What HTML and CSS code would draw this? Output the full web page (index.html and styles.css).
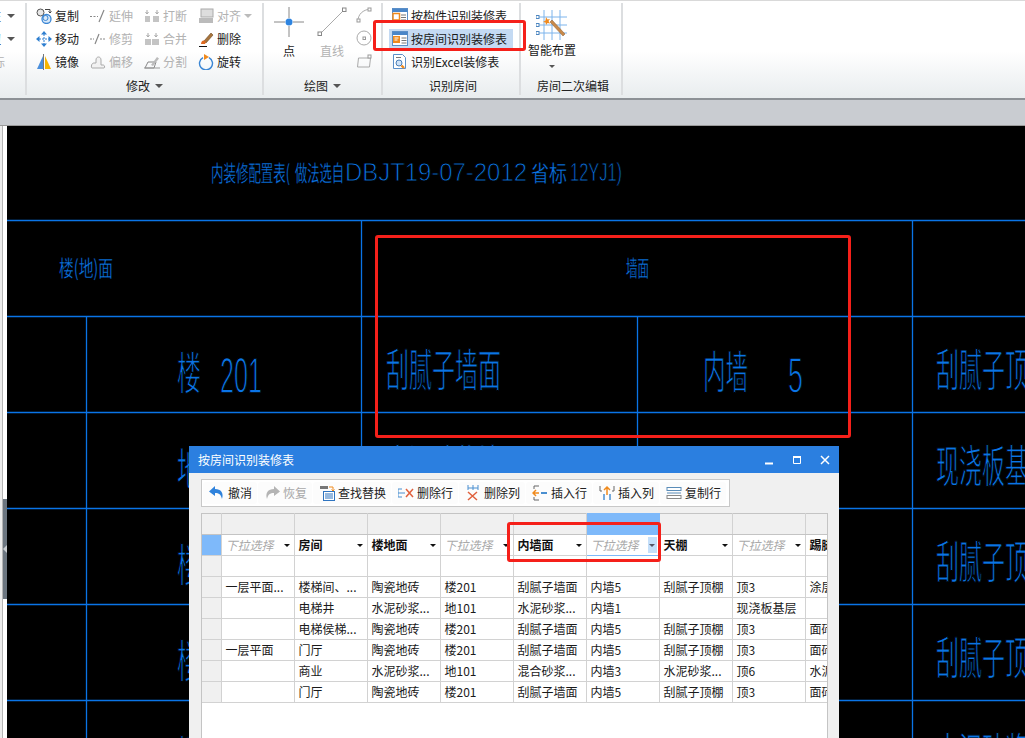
FILE: index.html
```html
<!DOCTYPE html>
<html lang="zh-CN">
<head>
<meta charset="utf-8">
<title>按房间识别装修表</title>
<link rel="stylesheet" href="styles.css">
</head>
<body>
<div class="page">
  <header class="ribbon">
    <section class="group group-cut">
      <div class="cut-rows">
        <div class="cut-row"><span>柱</span><i class="caret"></i></div>
        <div class="cut-row"><span>钮</span><i class="caret"></i></div>
        <div class="cut-row off"><span>标</span></div>
      </div>
    </section>

    <section class="group group-modify">
      <div class="tools">
        <div class="tool"><svg class="ic" viewBox="0 0 16 16"><circle cx="4.5" cy="4.5" r="3.5" fill="#e8e8e8" stroke="#555"/><circle cx="10.5" cy="11" r="4.5" fill="#d8e8f8" stroke="#3b86d4" stroke-width="1.3"/><circle cx="9.5" cy="10" r="2.5" fill="none" stroke="#3b86d4"/><path d="M9 1.5h5v3M12.5 3.5l1.5 1.5 1.5-1.5" fill="none" stroke="#444"/></svg><span>复制</span></div>
        <div class="tool off"><svg class="ic" viewBox="0 0 16 16"><path d="M0 8.5h8" stroke="#888" stroke-dasharray="2 1.5"/><path d="M9 14l5-12" stroke="#888" stroke-width="1.2"/></svg><span>延伸</span></div>
        <div class="tool off"><svg class="ic" viewBox="0 0 16 16"><path d="M1 8h5v6H1zM9 8h6v6H9z" fill="#c4c4c4"/><path d="M3 2v4M13 2v4M1.5 4L3 6l1.5-2M11.500 4L13 6l1.500-2" stroke="#aaa" fill="none"/></svg><span>打断</span></div>
        <div class="tool off"><svg class="ic" viewBox="0 0 16 16"><rect x="3" y="1" width="12" height="8" fill="#ddd" stroke="#aaa"/><rect x="1" y="10" width="14" height="5" fill="#bbb"/></svg><span>对齐</span><i class="caret light"></i></div>

        <div class="tool"><svg class="ic" viewBox="0 0 16 16"><path d="M8 3v10M3 8h10" stroke="#2e7fd0" stroke-dasharray="2 1"/><path d="M8 0l3 3.500H5zM8 16l3-3.500H5zM0 8l3.500-3v6zM16 8l-3.500-3v6z" fill="#2e7fd0"/></svg><span>移动</span></div>
        <div class="tool off"><svg class="ic" viewBox="0 0 16 16"><path d="M0 8h4M10 8h6" stroke="#888" stroke-dasharray="2 1"/><path d="M5 13L9 3" stroke="#888" stroke-width="1.2"/></svg><span>修剪</span></div>
        <div class="tool off"><svg class="ic" viewBox="0 0 16 16"><path d="M1 8h6v6H1zM8 8h7v6H8z" fill="#c4c4c4"/><path d="M4 2v4M12 2v4M2.500 4L4 6l1.500-2M10.500 4L12 6l1.500-2" stroke="#aaa" fill="none"/></svg><span>合并</span></div>
        <div class="tool"><svg class="ic" viewBox="0 0 16 16"><path d="M6 10L13 2l2 2-7 8z" fill="#a8743c" stroke="#6d4a22" stroke-width=".6"/><path d="M3 13c0-2 1.500-4 3-3.500 2 .5 2 2 1 3.500z" fill="#e06a20"/><path d="M1 15.500h8" stroke="#111"/></svg><span>删除</span></div>

        <div class="tool"><svg class="ic" viewBox="0 0 16 16"><path d="M7 2L1 15h6z" fill="#4a8fdc"/><path d="M7.500 0v16" stroke="#777"/><path d="M9 2l6 13H9z" fill="#f7b500"/></svg><span>镜像</span></div>
        <div class="tool off"><svg class="ic" viewBox="0 0 16 16"><path d="M2 14h12c1 0 1-3-1-3h-2V6c0-4-5-4-5 0v3H4c-3 0-3 5-2 5z" fill="#f2f2f2" stroke="#aaa"/></svg><span>偏移</span></div>
        <div class="tool off"><svg class="ic" viewBox="0 0 16 16"><path d="M1 14l3-6h8l-2 6z" fill="none" stroke="#888"/><path d="M7 11l6-8 2 1.500-6 7.500z" fill="#bbb"/><path d="M0 14h16" stroke="#999"/></svg><span>分割</span></div>
        <div class="tool"><svg class="ic" viewBox="0 0 16 16"><path d="M5 3.600A6.500 6.500 0 1 0 11 3.600" fill="none" stroke="#3b86d4" stroke-width="1.400"/><path d="M6 0l5 3-5 3z" fill="#f08a1d"/></svg><span>旋转</span></div>
      </div>
      <div class="group-label">修改<i class="caret"></i></div>
    </section>

    <section class="group group-draw">
      <div class="draw-tools">
        <div class="big"><svg class="ic-big" viewBox="0 0 30 30"><path d="M15 0v11M15 19v11M0 15h11M19 15h11" stroke="#888"/><circle cx="15" cy="15" r="3.500" fill="#2e84e0"/></svg><span>点</span></div>
        <div class="big off"><svg class="ic-big" viewBox="0 0 30 30"><path d="M3 27L27 3" stroke="#aaa"/><rect x="1" y="25" width="3.500" height="3.500" fill="#fff" stroke="#888"/><rect x="25.500" y="1" width="3.500" height="3.500" fill="#fff" stroke="#888"/></svg><span>直线</span></div>
        <div class="mini">
          <svg class="ic" viewBox="0 0 16 16"><path d="M2 14C2 7 7 3 14 2" fill="none" stroke="#aaa"/><rect x="1" y="12" width="3" height="3" fill="#fff" stroke="#999"/><rect x="12" y="1" width="3" height="3" fill="#fff" stroke="#999"/></svg>
          <svg class="ic" viewBox="0 0 16 16"><circle cx="8" cy="8" r="7" fill="none" stroke="#aaa"/><rect x="7" y="7" width="2.500" height="2.500" fill="#fff" stroke="#999"/></svg>
          <svg class="ic" viewBox="0 0 16 16"><path d="M2.500 5h12l-1 9h-12z" fill="none" stroke="#aaa"/><rect x="12" y="2" width="3" height="3" fill="#fff" stroke="#999"/></svg>
        </div>
      </div>
      <div class="group-label">绘图<i class="caret"></i></div>
    </section>

    <section class="group group-rec">
      <div class="rec-rows">
        <div class="rec-row"><svg class="ic" viewBox="0 0 16 16"><rect x=".5" y=".5" width="15" height="14" fill="#fff" stroke="#5b8fc8"/><path d="M.5 1h15v3H.5z" fill="#4a86c8"/><rect x="1" y="5.500" width="6.500" height="6.500" fill="#fff" stroke="#f08a1d" stroke-width="1.500"/><path d="M9 7h5M9 9.500h5M9 12h5" stroke="#777"/></svg><span>按构件识别装修表</span></div>
        <div class="rec-row on"><svg class="ic" viewBox="0 0 16 16"><rect x=".5" y=".5" width="15" height="14" fill="#fff" stroke="#5b8fc8"/><path d="M.5 1h15v3H.5z" fill="#4a86c8"/><rect x="1" y="5" width="7" height="7" fill="#f08a1d"/><path d="M2.500 7h4M2.500 9h3" stroke="#fff"/><path d="M9.500 7h5M9.500 9.500h5M9.500 12h5" stroke="#777"/></svg><span>按房间识别装修表</span></div>
        <div class="rec-row"><svg class="ic" viewBox="0 0 16 16"><path d="M1.500.5h9l3 3v11h-12z" fill="#fff" stroke="#5b8fc8"/><circle cx="7" cy="9" r="3" fill="#cfe3f7" stroke="#4a7eb8"/><path d="M9.500 11.500L12 14" stroke="#f08a1d" stroke-width="2.400"/><path d="M4 3.500h5" stroke="#777"/></svg><span>识别Excel装修表</span></div>
      </div>
      <div class="group-label">识别房间</div>
    </section>

    <section class="group group-room">
      <div class="smart">
        <svg class="ic-smart" viewBox="0 0 32 32"><path d="M8 1v30M16 1v30M24 1v30M1 8h30M1 16h30M1 24h30" stroke="#7db4ec"/><rect x="0" y="6.500" width="3" height="3" fill="#fff" stroke="#4d86c0"/><rect x="0" y="14.500" width="3" height="3" fill="#fff" stroke="#4d86c0"/><rect x="0" y="22.500" width="3" height="3" fill="#fff" stroke="#4d86c0"/><path d="M14 13l2-2 13 14-2 2z" fill="#c98a4a" stroke="#8a5a2c" stroke-width=".5"/><path d="M10 8l1.500 2.500 2.500-.5-1.500 2 1.500 2.500-2.500-.5-1.500 2-.5-2.500-2.500-.5 2.500-1.500z" fill="#f08a1d"/></svg>
        <span>智能布置</span>
        <i class="caret"></i>
      </div>
      <div class="group-label">房间二次编辑</div>
    </section>

    <section class="group group-rest"></section>
  </header>

  <div class="band"></div>

  <main class="work">
    <aside class="strip"><div class="grip"><i class="grip-arrow"></i></div></aside>
    <div class="canvas">
      <svg class="cad" viewBox="7 126 1018 612" preserveAspectRatio="none">
        <g class="cad-lines">
          <path d="M7 220.500H1025M7 316.500H1025M7 412.500H1025M7 508.500H1025M7 604.500H1025M7 700.500H1025"/>
          <path d="M86.500 316.500V738M361.500 220.500V738M637.500 316.500V738M912.500 220.500V738"/>
        </g>
        <g class="cad-small">
          <text x="211" y="181" textLength="79" lengthAdjust="spacingAndGlyphs">内装修配置表(</text>
          <text x="295" y="181" textLength="49" lengthAdjust="spacingAndGlyphs">做法选自</text>
          <text x="345" y="181" textLength="182" lengthAdjust="spacingAndGlyphs" class="latin">DBJT19-07-2012</text>
          <text x="531" y="181" textLength="36" lengthAdjust="spacingAndGlyphs">省标</text>
          <text x="570" y="181" textLength="52" lengthAdjust="spacingAndGlyphs" class="latin">12YJ1)</text>
          <text x="59" y="276" textLength="54" lengthAdjust="spacingAndGlyphs">楼(地)面</text>
          <text x="626" y="276" textLength="23" lengthAdjust="spacingAndGlyphs">墙面</text>
        </g>
        <g class="cad-big">
          <text x="177" y="390" textLength="24" lengthAdjust="spacingAndGlyphs">楼</text>
          <text x="220" y="393" textLength="42" lengthAdjust="spacingAndGlyphs" class="latin">201</text>
          <text x="177" y="486" textLength="24" lengthAdjust="spacingAndGlyphs">地</text>
          <text x="177" y="582" textLength="24" lengthAdjust="spacingAndGlyphs">楼</text>
          <text x="177" y="678" textLength="24" lengthAdjust="spacingAndGlyphs">楼</text>
          <text x="177" y="774" textLength="24" lengthAdjust="spacingAndGlyphs">楼</text>
          <text x="386" y="387" textLength="115" lengthAdjust="spacingAndGlyphs">刮腻子墙面</text>
          <text x="703" y="389" textLength="45" lengthAdjust="spacingAndGlyphs">内墙</text>
          <text x="788" y="393" textLength="15" lengthAdjust="spacingAndGlyphs" class="latin">5</text>
          <text x="386" y="483" textLength="138" lengthAdjust="spacingAndGlyphs">水泥砂浆墙面</text>
          <text x="936" y="387" textLength="115" lengthAdjust="spacingAndGlyphs">刮腻子顶棚</text>
          <text x="936" y="483" textLength="115" lengthAdjust="spacingAndGlyphs">现浇板基层</text>
          <text x="936" y="579" textLength="115" lengthAdjust="spacingAndGlyphs">刮腻子顶棚</text>
          <text x="936" y="675" textLength="115" lengthAdjust="spacingAndGlyphs">刮腻子顶棚</text>
          <text x="936" y="771" textLength="115" lengthAdjust="spacingAndGlyphs">水泥砂浆顶</text>
        </g>
      </svg>
    </div>
  </main>

  <div class="mark mark-ribbon"></div>
  <div class="mark mark-cad"></div>

  <div class="dialog">
    <div class="titlebar">
      <span>按房间识别装修表</span>
      <div class="win-btns">
        <svg class="win" viewBox="0 0 10 10"><path d="M1 8.500h8" stroke="#fff" stroke-width="2"/></svg>
        <svg class="win" viewBox="0 0 10 10"><path d="M1.500 2.500h7v6h-7z" fill="none" stroke="#fff"/><path d="M1 2h8" stroke="#fff" stroke-width="2"/></svg>
        <svg class="win" viewBox="0 0 10 10"><path d="M1 1l8 8M9 1l-8 8" stroke="#fff" stroke-width="1.500"/></svg>
      </div>
    </div>
    <div class="dialog-body">
      <div class="toolbar">
        <div class="tbtn"><svg class="ic" viewBox="0 0 16 16"><path d="M6 1L0 6.500 6 11V8c4 0 6 1.500 7 6 2-6-1-10-7-10z" fill="#2f82dc"/></svg><span>撤消</span></div>
        <div class="tbtn off"><svg class="ic" viewBox="0 0 16 16"><path d="M10 1l6 5.500-6 4.500V8c-4 0-6 1.500-7 6-2-6 1-10 7-10z" fill="#b4b4b4"/></svg><span>恢复</span></div>
        <div class="tbtn"><svg class="ic" viewBox="0 0 16 16"><rect x="1" y="1" width="8" height="3" fill="#777"/><path d="M10 2h4v4M12.500 4.500L14 6l1.500-1.500" fill="none" stroke="#f08a1d"/><rect x="4.500" y="6.500" width="11" height="9" fill="#fff" stroke="#2f74c0"/><path d="M6 9h8M6 11h8M6 13h8" stroke="#2f74c0"/></svg><span>查找替换</span></div>
        <div class="tbtn"><svg class="ic" viewBox="0 0 16 16"><path d="M0 4h4M0 8h7M0 12h4M0 4v8" fill="none" stroke="#4a8fd0"/><path d="M8 4l7 8M15 4l-7 8" stroke="#e0603c" stroke-width="1.500"/></svg><span>删除行</span></div>
        <div class="tbtn"><svg class="ic" viewBox="0 0 16 16"><path d="M3 0v5M8 0v5M13 0v5M3 3h10" stroke="#4a8fd0"/><path d="M3 7l9 8M12 7l-9 8" stroke="#e0603c" stroke-width="1.500"/></svg><span>删除列</span></div>
        <div class="tbtn"><svg class="ic" viewBox="0 0 16 16"><path d="M2 1h5M2 15h5M2 1v3M2 15v-3" fill="none" stroke="#666"/><path d="M7 8H1M4 5L1 8l3 3" fill="none" stroke="#f08a1d" stroke-width="1.500"/><path d="M9 8h6" stroke="#4a8fd0" stroke-width="2"/></svg><span>插入行</span></div>
        <div class="tbtn"><svg class="ic" viewBox="0 0 16 16"><path d="M1 1v5M15 1v5M1 6h2M13 6h2" fill="none" stroke="#666"/><path d="M8 10V2M5 5l3-3 3 3" fill="none" stroke="#f08a1d" stroke-width="1.500"/><path d="M5 9v6M11 9v6" stroke="#4a8fd0" stroke-width="1.500"/></svg><span>插入列</span></div>
        <div class="tbtn"><svg class="ic" viewBox="0 0 16 16"><rect x="1" y="2.500" width="14" height="3" fill="#fff" stroke="#5a8cb8"/><path d="M1 8h14" stroke="#5a8cb8"/><rect x="1" y="10.500" width="14" height="3" fill="#fff" stroke="#888"/></svg><span>复制行</span></div>
      </div>
      <div class="sheet">
        <table class="grid">
          <colgroup><col class="c-h"><col class="c-n"><col class="c-n"><col class="c-n"><col class="c-n"><col class="c-n"><col class="c-n"><col class="c-n"><col class="c-n"><col class="c-l"></colgroup>
          <tr class="r-top"><td></td><td></td><td></td><td></td><td></td><td></td><td class="sel-top"></td><td></td><td></td><td></td></tr>
          <tr class="r-sel">
            <td class="corner"></td>
            <td><div class="dd ph"><span>下拉选择</span><i class="drop"></i></div></td>
            <td><div class="dd"><span>房间</span><i class="drop"></i></div></td>
            <td><div class="dd"><span>楼地面</span><i class="drop"></i></div></td>
            <td><div class="dd ph"><span>下拉选择</span><i class="drop"></i></div></td>
            <td><div class="dd"><span>内墙面</span><i class="drop"></i></div></td>
            <td class="sel-cell"><div class="dd ph"><span>下拉选择</span><b class="drop-box"><i class="drop"></i></b></div></td>
            <td><div class="dd"><span>天棚</span><i class="drop"></i></div></td>
            <td><div class="dd ph"><span>下拉选择</span><i class="drop"></i></div></td>
            <td><div class="dd"><span>踢脚</span></div></td>
          </tr>
          <tr><td class="rh"></td><td></td><td></td><td></td><td></td><td></td><td></td><td></td><td></td><td></td></tr>
          <tr><td class="rh"></td><td>一层平面...</td><td>楼梯间、...</td><td>陶瓷地砖</td><td>楼201</td><td>刮腻子墙面</td><td>内墙5</td><td>刮腻子顶棚</td><td>顶3</td><td>涂层</td></tr>
          <tr><td class="rh"></td><td></td><td>电梯井</td><td>水泥砂浆...</td><td>地101</td><td>水泥砂浆...</td><td>内墙1</td><td></td><td>现浇板基层</td><td></td></tr>
          <tr><td class="rh"></td><td></td><td>电梯侯梯...</td><td>陶瓷地砖</td><td>楼201</td><td>刮腻子墙面</td><td>内墙5</td><td>刮腻子顶棚</td><td>顶3</td><td>面砖</td></tr>
          <tr><td class="rh"></td><td>一层平面</td><td>门厅</td><td>陶瓷地砖</td><td>楼201</td><td>刮腻子墙面</td><td>内墙5</td><td>刮腻子顶棚</td><td>顶3</td><td>面砖</td></tr>
          <tr><td class="rh"></td><td></td><td>商业</td><td>水泥砂浆...</td><td>地101</td><td>混合砂浆...</td><td>内墙3</td><td>水泥砂浆...</td><td>顶6</td><td>水泥</td></tr>
          <tr><td class="rh"></td><td></td><td>门厅</td><td>陶瓷地砖</td><td>楼201</td><td>刮腻子墙面</td><td>内墙5</td><td>刮腻子顶棚</td><td>顶3</td><td>面砖</td></tr>
        </table>
      </div>
    </div>
    <div class="mark mark-grid"></div>
  </div>
</div>
</body>
</html>
```

FILE: styles.css
```css
* { box-sizing: border-box; }
html, body { margin: 0; padding: 0; height: 100%; overflow: hidden; background: #000; }
body { font: 12px/16px "Noto Sans CJK SC", "Liberation Sans", sans-serif; color: #1a1a1a; }
.page { position: relative; width: 1025px; height: 738px; overflow: hidden; display: flex; flex-direction: column; }

/* ribbon */
.ribbon { height: 98px; flex: none; display: flex; padding-top: 3px; border-top: 1px solid #d9d9d9; background: linear-gradient(#fff 0, #fff 50px, #e8ecee 98px); }
.group { height: 92px; margin-top: -1px; display: flex; flex-direction: column; border-right: 2px solid #dcdee0; flex: none; overflow: hidden; }
.group-cut { width: 27px; }
.group-modify { width: 237px; }
.group-draw { width: 119px; }
.group-rec { width: 138px; }
.group-room { width: 102px; }
.group-rest { flex: 1; border-right: 0; }
.group-label { height: 18px; flex: none; display: flex; align-items: center; justify-content: center; gap: 5px; color: #222; line-height: 18px; }
.group-rec .group-label, .group-room .group-label { padding-left: 4px; }
.caret { display: block; width: 0; height: 0; border: 4px solid transparent; border-top: 4px solid #555; border-bottom: 0; flex: none; }
.caret.light { border-top-color: #bbb; }
.off { color: #b2b2b2; }

.cut-rows { flex: 1; padding-top: 1px; }
.cut-row { height: 23px; display: flex; align-items: center; justify-content: flex-end; gap: 6px; padding-right: 10px; white-space: nowrap; }
.cut-row.off { padding-right: 20px; }

.tools { flex: 1; display: grid; grid-template-columns: repeat(4, 54px); grid-auto-rows: 23px; padding: 1px 0 0 9px; }
.tool { display: flex; align-items: center; gap: 3px; white-space: nowrap; }
.ic { width: 16px; height: 16px; flex: none; display: block; }

.draw-tools { flex: 1; display: flex; padding-left: 10px; }
.big { width: 30px; margin-right: 13px; display: flex; flex-direction: column; align-items: center; padding-top: 4px; white-space: nowrap; }
.ic-big { width: 30px; height: 30px; display: block; margin-bottom: 6px; }
.mini { display: flex; flex-direction: column; gap: 7px; padding-top: 4px; margin-left: -4px; }

.rec-rows { flex: 1; padding: 1px 0 0 6px; }
.rec-row { height: 23px; display: flex; align-items: center; gap: 3px; padding-left: 3px; white-space: nowrap; }
.rec-row.on { width: 124px; height: 19px; margin: 2px 0; background: #c4daf3; }

.smart { flex: 1; width: 48px; margin-left: 7px; display: flex; flex-direction: column; align-items: center; padding-top: 6px; white-space: nowrap; }
.ic-smart { width: 32px; height: 32px; display: block; margin-bottom: 1px; }
.smart .caret { margin-top: 7px; border-width: 3px; border-bottom: 0; }

/* band */
.band { height: 28px; flex: none; background: #c9ccd1; border-top: 2px solid #8d9196; border-bottom: 1px solid #9a9a9a; }

/* workspace */
.work { flex: 1; display: flex; min-height: 0; }
.strip { width: 7px; flex: none; position: relative; background: linear-gradient(90deg, #ececec 0, #ececec 2px, #b5b5b5 2px, #b5b5b5 3px, #fff 3px); }
.grip { position: absolute; left: 3px; top: 373px; width: 4px; height: 100px; background: #6c7680; }
.grip-arrow { position: absolute; left: 0; top: 46px; width: 0; height: 0; border: 4px solid transparent; border-left: 0; border-right: 4px solid #c8ccd0; }
.canvas { flex: 1; background: #000; overflow: hidden; }
.cad { display: block; width: 1018px; height: 612px; }
.cad-lines path { fill: none; stroke: #0a74e6; stroke-width: 1.3; }
.cad text { font-family: "Noto Sans CJK SC", "Liberation Sans", sans-serif; fill: #0a74e6; }
.cad .latin { font-family: "Liberation Sans", sans-serif; }
.cad-small text { font-size: 22px; stroke: #000; stroke-width: .3px; }
.cad-small .latin { font-size: 26px; stroke-width: .9px; }
.cad-big text { font-size: 45px; stroke: #000; stroke-width: 1.1px; }
.cad-big .latin { font-size: 50px; stroke-width: 1.4px; }

/* red marks */
.mark { position: absolute; border: 3px solid #f5201a; border-radius: 3px; pointer-events: none; }
.mark-ribbon { left: 373px; top: 20px; width: 153px; height: 31px; }
.mark-cad { left: 375px; top: 235px; width: 476px; height: 203px; }
.mark-grid { left: 318px; top: 76px; width: 154px; height: 40px; }

/* dialog */
.dialog { position: absolute; left: 189px; top: 446px; width: 650px; height: 300px; background: #f0f0f0; }
.titlebar { height: 27px; background: #2b7fe0; color: #fff; display: flex; align-items: center; justify-content: space-between; padding: 0 9px; }
.win-btns { display: flex; gap: 18px; }
.win { width: 10px; height: 10px; display: block; }
.dialog-body { padding: 6px 12px 0; display: flex; flex-direction: column; gap: 6px; }
.toolbar { align-self: flex-start; height: 28px; display: flex; gap: 1px; padding: 2px 3px 2px 1px; background: #fff; border: 1px solid #c8c8c8; }
.tbtn { display: flex; align-items: center; gap: 3px; padding: 0 5px 0 6px; border-radius: 3px; background: #fcfcfc; color: #222; white-space: nowrap; }
.tbtn.off { color: #a8a8a8; }
.sheet { width: 627px; height: 260px; background: #fff; border-left: 1px solid #c4c4c4; border-right: 1px solid #c4c4c4; }
.grid { table-layout: fixed; width: 625px; border-collapse: collapse; }
.c-h { width: 19px; }
.c-n { width: 73px; }
.c-l { width: 22px; }
.grid td { height: 21px; padding: 0 3px 0 4px; border: 1px solid #d2d2d2; overflow: hidden; white-space: nowrap; color: #1a1a1a; }
.grid td:first-child { padding: 0; border-left: 0; }
.grid td:last-child { border-right: 0; }
.r-top td { background: #f0f0f0; border-top-color: #c4c4c4; border-bottom-color: #c4c4c4; }
.r-top .sel-top { background: #7eb9fa; border-color: #7eb9fa; }
.corner { background: #7eb9fa; }
.rh { background: #f0f0f0; }
.dd { display: flex; align-items: center; justify-content: space-between; font-weight: 700; color: #111; padding-right: 1px; }
.dd.ph { font-weight: 400; font-style: italic; color: #aaa; }
.drop { display: block; width: 0; height: 0; border: 3px solid transparent; border-top: 3px solid #111; border-bottom: 0; flex: none; }
.grid td.sel-cell { border: 1px solid #7eb9fa; padding-right: 1px; }
.drop-box { width: 9px; height: 16px; background: #c4dffa; display: flex; align-items: center; justify-content: center; }
.drop-box .drop { border-top-color: #556; }
```
